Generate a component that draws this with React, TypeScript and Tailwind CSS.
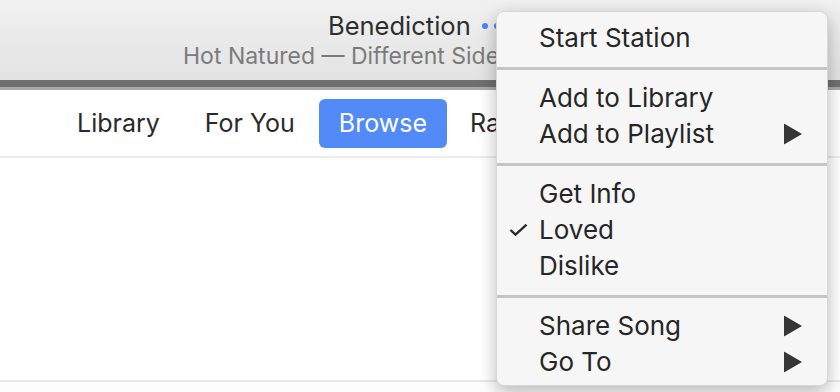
import React from "react";

const Arrow = () => (
  <svg width="18" height="21" viewBox="0 0 18 21" className="absolute right-[25px] top-1/2 -translate-y-1/2">
    <polygon points="0,0 18,10.5 0,21" fill="#363636" />
  </svg>
);

const Check = () => (
  <svg width="19" height="13" viewBox="0 0 19 13" className="absolute left-[12px] top-1/2 -translate-y-1/2">
    <polyline points="1.5,6.5 6.5,11.2 17.5,1.2" fill="none" stroke="#2a2a2a" strokeWidth="2.3" />
  </svg>
);

const Item = ({ label, arrow, check }: { label: string; arrow?: boolean; check?: boolean }) => (
  <div className="relative h-[36px] flex items-center pl-[42px] text-[26px] text-[#262626] leading-none">
    {check && <Check />}
    <span>{label}</span>
    {arrow && <Arrow />}
  </div>
);

const Sep = () => <div className="mt-[11px] mb-[10px] h-[3px] bg-[#c5c5c5]" />;

export default function App() {
  return (
    <div
      className="relative w-[840px] h-[392px] overflow-hidden bg-white flex flex-col"
      style={{ fontFamily: "Inter, 'Helvetica Neue', Arial, sans-serif" }}
    >
      <div className="h-[80px] bg-gradient-to-b from-[#f1f1f1] to-[#e3e3e3] flex flex-col">
        <div className="pl-[328px] pt-[14px] flex items-center h-[37px]">
          <span className="text-[25.5px] leading-none text-[#2e2e2e]">Benediction</span>
          <span className="ml-[11px] w-[6px] h-[6px] rounded-full bg-[#4a86f0]" />
          <span className="ml-[6px] w-[6px] h-[6px] rounded-full bg-[#4a86f0]" />
        </div>
        <div className="pl-[183px] pt-[6px] h-[32px] flex items-center">
          <span className="text-[23px] leading-none text-[#7b7b7b] whitespace-nowrap">
            Hot Natured — Different Sides
          </span>
        </div>
      </div>
      <div className="h-[7px] bg-[#707070]" />
      <div className="h-[3px] bg-[#a9a9a9]" />
      <div className="h-[66px] flex items-center pl-[56px] gap-[2px] text-[25px] leading-none text-[#2a2a2a]">
        <div className="px-[21px] h-[49px] flex items-center">Library</div>
        <div className="pl-[22px] pr-[22px] h-[49px] flex items-center">For You</div>
        <div className="px-[20px] h-[49px] flex items-center rounded-[6px] bg-[#528af7] text-white">Browse</div>
        <div className="px-[21px] h-[49px] flex items-center">Radio</div>
      </div>
      <div className="h-[2px] bg-[#ececec]" />
      <div className="flex-1 bg-white" />
      <div className="h-[2px] bg-[#e8e8e8]" />
      <div className="h-[10px] bg-[#fdfdfd]" />

      <div className="absolute left-[496px] top-[11px] w-[332px] rounded-[8px] bg-[#f6f6f6] pt-[8px] pb-[5px] border border-[rgba(0,0,0,0.12)] shadow-[0_6px_18px_rgba(0,0,0,0.28)]">
        <Item label="Start Station" />
        <Sep />
        <Item label="Add to Library" />
        <Item label="Add to Playlist" arrow />
        <Sep />
        <Item label="Get Info" />
        <Item label="Loved" check />
        <Item label="Dislike" />
        <Sep />
        <Item label="Share Song" arrow />
        <Item label="Go To" arrow />
      </div>
    </div>
  );
}
